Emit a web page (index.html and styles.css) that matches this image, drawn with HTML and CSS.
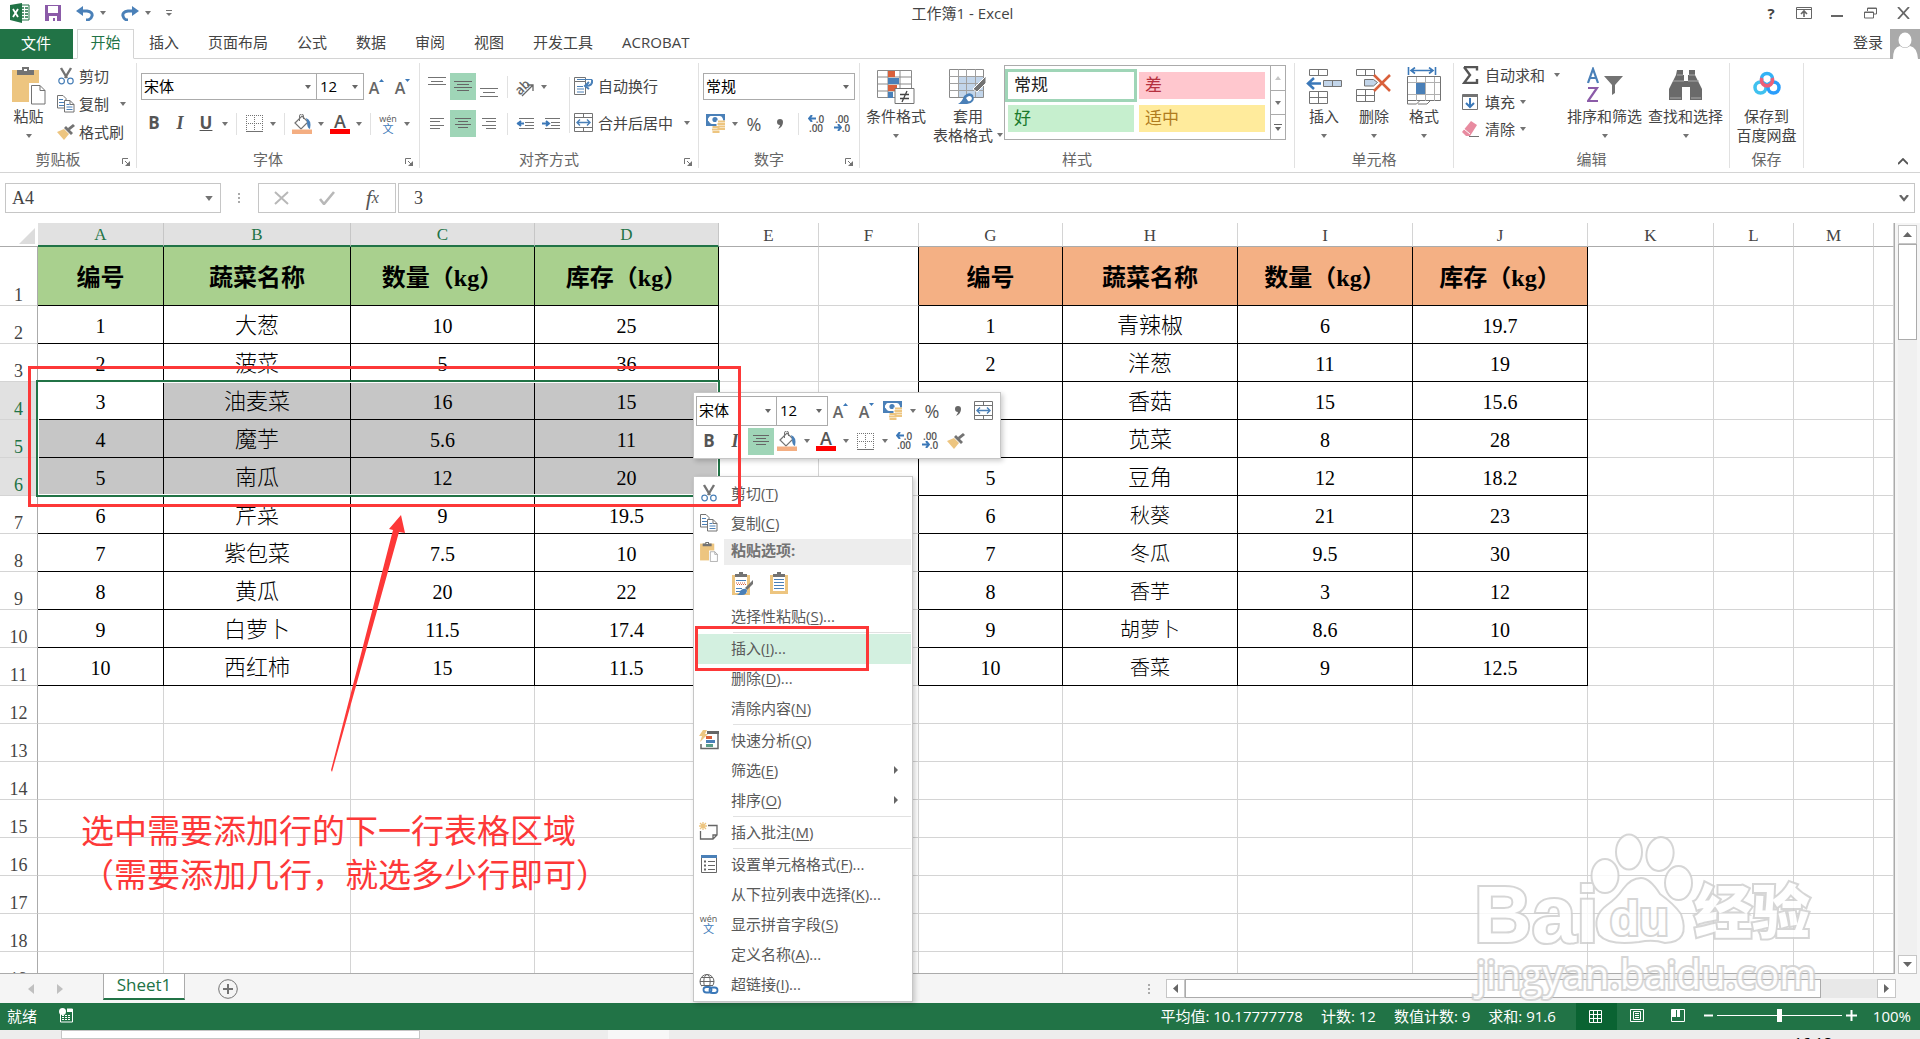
FILE: index.html
```
<!DOCTYPE html>
<html lang="zh-CN">
<head>
<meta charset="UTF-8">
<meta name="viewport" content="width=device-width, initial-scale=1">
<title>工作簿1 - Excel</title>
<link rel="stylesheet" href="styles.css">
</head>
<body>
<!-- icons used more than once -->
<svg width="0" height="0" class="defs">
  <symbol id="i-arrow" viewBox="0 0 6 4"><path d="M0 0h6L3 4z" fill="#737373"/></symbol>
  <symbol id="i-cut" viewBox="0 0 16 18"><path d="M3 1l6 10M13 1L7 11" stroke="#737373" stroke-width="2.4" fill="none"/><circle cx="3.6" cy="14" r="2.8" fill="none" stroke="#4a80b8" stroke-width="1.2"/><circle cx="12.4" cy="14" r="2.8" fill="none" stroke="#4a80b8" stroke-width="1.2"/></symbol>
  <symbol id="i-copy" viewBox="0 0 18 18"><path d="M.5 13V.5H6l3 3V13z" fill="#fff" stroke="#737373"/><path d="M2 4.500h4M2 7.500h5M2 10.500h5" stroke="#4a80b8"/><path d="M7.500 17V5.500H13l4 4V17z" fill="#fff" stroke="#737373"/><path d="M13 5.500v4h4" fill="none" stroke="#737373"/><path d="M9.500 9.500h3M9.500 12h6M9.500 14.500h6" stroke="#4a80b8"/></symbol>
  <symbol id="i-brush" viewBox="0 0 18 16"><path d="M0 8l7-3 5 5-5 6z" fill="#edc580"/><path d="M7 4l2-2 7 7-2 2zM11 4l5-4 2 2-5 4z" fill="#737373"/></symbol>
  <symbol id="i-paste" viewBox="0 0 34 38"><path d="M0 3h27v32H0z" fill="#edc580"/><path d="M5 7V3h5V0h7v3h5v5H5z" fill="#737373"/><path d="M12 2h3v2h-3z" fill="#fff"/><path d="M18.500 17.500H28l6 6V37H18.500z" fill="#fff" stroke="#fff" stroke-width="3"/><path d="M19.500 18.500H28l5 5V37H19.500z" fill="#fff" stroke="#737373"/><path d="M28 18.500v5h5" fill="none" stroke="#737373"/></symbol>
  <symbol id="i-borders" viewBox="0 0 17 17"><path d="M.5 0v17M8.500 0v17M16.500 0v17M0 .5h17M0 8.500h17" stroke="#737373" stroke-dasharray="1 1"/><path d="M0 16.500h17" stroke="#737373"/></symbol>
  <symbol id="i-fill" viewBox="0 0 20 20"><path d="M3 9l7-7 6 6-7 7z" fill="#fff" stroke="#737373" stroke-width="1.200"/><path d="M7.500 7V2q0-2 2-2t2 2v3" fill="none" stroke="#737373"/><path d="M14 4q6 2 4 11-3-1-3-7z" fill="#4a80b8"/><path d="M0 15.500h20V20H0z" fill="#f4ae82"/></symbol>
  <symbol id="i-money" viewBox="0 0 20 20"><path d="M0 0h19v12H0z" fill="#4a80b8"/><path d="M2 5q1-3 3-3h9q2 0 3 3v2H2z" fill="#fff"/><path d="M2 6q2 4 4 4h5V2H6Q3 2 2 6z" fill="#fff"/><circle cx="9" cy="5.500" r="2.600" fill="#4a80b8"/><path d="M10.500 6.500H20V17h-5v3H5.500v-8h5z" fill="#fff"/><path d="M12 7.500h7M11.500 10h7.500M12 12.500h7M11.500 15h7.500M6.500 13h7M6 15.500h7.500M6.500 18h7" stroke="#edc580" stroke-width="1.800"/></symbol>
  <symbol id="i-merge" viewBox="0 0 20 20"><path d="M.5 .5h18v18H.5zM.5 4.500h18M.5 14.500h18M9.500 .5v4M9.500 14.500v4" fill="#fff" stroke="#737373"/><path d="M3 9.500h13M6 6.500l-3 3 3 3M13 6.500l3 3-3 3" fill="none" stroke="#4a80b8" stroke-width="1.400"/></symbol>
  <symbol id="i-comma" viewBox="0 0 8 10"><path d="M4 0a3 3 0 0 1 3 3q0 5-5 7 2-3 2-4a3 3 0 1 1 0-6z" fill="#666"/></symbol>
  <symbol id="i-launch" viewBox="0 0 8 8"><path d="M.5 6V.5H6M3 3l3 3" fill="none" stroke="#737373"/><path d="M8 3v5H3z" fill="#737373"/></symbol>
  <symbol id="i-bluel" viewBox="0 0 8 7"><path d="M4 0L1 3.500 4 7M1 3.500h7" fill="none" stroke="#3b78b8" stroke-width="2"/></symbol>
</svg>

<header class="titlebar">
  <div class="qat">
    <svg class="logo" width="20" height="20"><path d="M9 2h10v15H9z" fill="#fff" stroke="#217346"/><path d="M12 5h2M15 5h3M12 8h2M15 8h3M12 11h2M15 11h3M12 14h2M15 14h3" stroke="#217346" stroke-width="1.500"/><path d="M0 2l12-2v20L0 17z" fill="#217346"/><path d="M3 6l5 8M8 6l-5 8" stroke="#fff" stroke-width="1.800"/></svg>
    <button aria-label="保存"><svg width="16" height="16"><path d="M0 0h16v16H0z" fill="#8b5ba8"/><path d="M3 1h10v7H3zM4 11h8v5h-2v-3H8v3H4z" fill="#fff"/></svg></button>
    <button aria-label="撤消"><svg width="18" height="15"><path d="M3 5h8q6 1 5 5-1 4-6 4" fill="none" stroke="#4a80b8" stroke-width="3"/><path d="M0 5l7-5v10z" fill="#4a80b8"/></svg><svg class="da"><use href="#i-arrow"/></svg></button>
    <button aria-label="恢复"><svg width="18" height="15"><path d="M15 5H7q-6 1-5 5 1 4 5 4" fill="none" stroke="#4a80b8" stroke-width="3"/><path d="M18 5l-7-5v10z" fill="#4a80b8"/></svg><svg class="da"><use href="#i-arrow"/></svg></button>
    <button aria-label="自定义"><svg width="6" height="7"><path d="M0 .5h6" stroke="#737373"/><path d="M0 3h6L3 6z" fill="#737373"/></svg></button>
  </div>
  <h1>工作簿1 - Excel</h1>
  <div class="winbtns">
    <button class="help">?</button>
    <button aria-label="功能区选项"><svg width="16" height="13"><path d="M.5 .5h15v11H.5zM.5 2.500h15" fill="none" stroke="#666"/><path d="M8 10V4M5 7l3-3 3 3" fill="none" stroke="#666" stroke-width="1.600"/></svg></button>
    <button aria-label="最小化"><svg width="12" height="12"><path d="M0 9h12" stroke="#666" stroke-width="2"/></svg></button>
    <button aria-label="还原"><svg width="13" height="12"><path d="M3.500 4V1h9v6H10M3 1.500h9M.5 5h9v6h-9zM.5 5.500h9" fill="none" stroke="#666"/></svg></button>
    <button aria-label="关闭"><svg width="13" height="12"><path d="M1 0l11 12M12 0L1 12" stroke="#666" stroke-width="1.800"/></svg></button>
  </div>
</header>

<nav class="tabs">
  <button class="file">文件</button>
  <button class="active">开始</button>
  <button>插入</button>
  <button>页面布局</button>
  <button>公式</button>
  <button>数据</button>
  <button>审阅</button>
  <button>视图</button>
  <button>开发工具</button>
  <button>ACROBAT</button>
  <a class="login" href="#">登录</a>
  <svg class="avatar" width="30" height="30"><path d="M0 0h30v30H0z" fill="#aaa"/><ellipse cx="15" cy="11" rx="6.500" ry="7.500" fill="#fff"/><path d="M3 30q0-12 7-13 5 4 10 0 7 1 8 13z" fill="#fff"/></svg>
</nav>

<section class="ribbon">
  <div class="group g-clip">
    <div class="body">
      <button class="big"><svg width="34" height="38"><use href="#i-paste"/></svg><span>粘贴</span><svg class="da"><use href="#i-arrow"/></svg></button>
      <div class="stack">
        <button><svg width="18" height="18"><use href="#i-cut"/></svg>剪切</button>
        <button><svg width="18" height="18"><use href="#i-copy"/></svg>复制<svg class="da far"><use href="#i-arrow"/></svg></button>
        <button><svg width="18" height="16"><use href="#i-brush"/></svg>格式刷</button>
      </div>
    </div>
    <footer class="more">剪贴板<svg class="launch"><use href="#i-launch"/></svg></footer>
  </div>

  <div class="group g-font">
    <div class="body rows">
      <div class="row">
        <select class="fontname" aria-label="字体"><option>宋体</option></select><select class="fontsize" aria-label="字号"><option>12</option></select>
        <button class="ib grow" aria-label="增大字号">A<svg width="6" height="4"><path d="M0 3h5L2.500 0z" fill="#3b78b8"/></svg></button>
        <button class="ib grow" aria-label="减小字号">A<svg width="6" height="4"><path d="M0 0h5L2.500 3z" fill="#3b78b8"/></svg></button>
      </div>
      <div class="row">
        <button class="ib b">B</button><button class="ib i">I</button><button class="ib u">U</button><button class="dd" aria-label="下划线"><svg class="da"><use href="#i-arrow"/></svg></button>
        <i class="sep"></i>
        <button class="ib" aria-label="边框"><svg width="17" height="17"><use href="#i-borders"/></svg></button><button class="dd" aria-label="边框选项"><svg class="da"><use href="#i-arrow"/></svg></button>
        <i class="sep"></i>
        <button class="ib" aria-label="填充颜色"><svg width="20" height="20"><use href="#i-fill"/></svg></button><button class="dd" aria-label="填充选项"><svg class="da"><use href="#i-arrow"/></svg></button>
        <button class="ib"><span class="fc">A</span></button><button class="dd" aria-label="字体颜色选项"><svg class="da"><use href="#i-arrow"/></svg></button>
        <i class="sep"></i>
        <button class="ib wen">wén<b>文</b></button><button class="dd" aria-label="拼音选项"><svg class="da"><use href="#i-arrow"/></svg></button>
      </div>
    </div>
    <footer class="more">字体<svg class="launch"><use href="#i-launch"/></svg></footer>
  </div>

  <div class="group g-align">
    <div class="body">
      <div class="rows">
        <div class="row">
          <button class="ib" aria-label="顶端对齐"><svg width="18" height="22"><path d="M0 1.500h18M3 5.500h12M0 8.500h18" stroke="#737373"/></svg></button><button class="ib on" aria-label="垂直居中"><svg width="18" height="14"><path d="M0 1.500h18M3 4.500h12M0 7.500h18M3 10.500h12" stroke="#666"/></svg></button><button class="ib" aria-label="底端对齐"><svg width="18" height="22"><path d="M0 12.500h18M3 16.500h12M0 20.500h18" stroke="#737373"/></svg></button>
          <i class="sep"></i>
          <button class="ib" aria-label="方向"><svg width="22" height="20"><text x="1" y="15" transform="rotate(-45 8 11)" font-size="13" font-family="Open Sans" font-weight="600" fill="#666">ab</text><path d="M8 19L19 8M13 8h6v6" fill="none" stroke="#666" stroke-width="1.300"/></svg></button><button class="dd" aria-label="方向选项"><svg class="da"><use href="#i-arrow"/></svg></button>
        </div>
        <div class="row">
          <button class="ib" aria-label="左对齐"><svg width="14" height="12"><path d="M0 .5h14M0 3.500h10M0 7.500h14M0 10.500h10" stroke="#737373"/></svg></button><button class="ib on" aria-label="居中"><svg width="18" height="14"><path d="M1 1.500h16M4 4.500h10M1 7.500h16M4 10.500h10" stroke="#666"/></svg></button><button class="ib" aria-label="右对齐"><svg width="14" height="12"><path d="M0 .5h14M4 3.500h10M0 7.500h14M4 10.500h10" stroke="#737373"/></svg></button>
          <i class="sep"></i>
          <button class="ib" aria-label="减少缩进"><svg width="18" height="12"><path d="M3 .5h15M9 4.500h9M9 7.500h9M3 10.500h15" stroke="#737373"/><path d="M5 3L2 5.500 5 8M1 5.500h7" fill="none" stroke="#3b78b8" stroke-width="2"/></svg></button><button class="ib" aria-label="增加缩进"><svg width="18" height="12"><path d="M3 .5h15M9 4.500h9M9 7.500h9M3 10.500h15" stroke="#737373"/><path d="M4 3l3 2.500L4 8M0 5.500h7" fill="none" stroke="#3b78b8" stroke-width="2"/></svg></button>
        </div>
      </div>
      <i class="sep tall"></i>
      <div class="rows">
        <div class="row"><button class="tb"><svg width="20" height="20"><path d="M.5 1.500h11v4H.5zM.5 5.500h11v13H.5z" fill="#fff" stroke="#737373"/><path d="M3 3.500h15v3q0 3-4 3h-2M3 10.500h6M3 13h7M3 16h7" fill="none" stroke="#4a80b8"/><path d="M15 6l-4 4 4 3M12 10q7 0 6-6" fill="none" stroke="#4a80b8" stroke-width="2"/></svg>自动换行</button></div>
        <div class="row"><button class="tb"><svg width="20" height="20"><use href="#i-merge"/></svg>合并后居中<svg class="da far"><use href="#i-arrow"/></svg></button></div>
      </div>
    </div>
    <footer class="more">对齐方式<svg class="launch"><use href="#i-launch"/></svg></footer>
  </div>

  <div class="group g-num">
    <div class="body rows">
      <div class="row"><select class="numfmt" aria-label="数字格式"><option>常规</option></select></div>
      <div class="row">
        <button class="ib" aria-label="会计格式"><svg width="20" height="20"><use href="#i-money"/></svg></button><button class="dd" aria-label="会计选项"><svg class="da"><use href="#i-arrow"/></svg></button><button class="ib pct">%</button><button class="ib" aria-label="千位分隔样式"><svg width="8" height="10"><use href="#i-comma"/></svg></button>
        <i class="sep"></i>
        <button class="ib dec"><span><svg width="8" height="7"><use href="#i-bluel"/></svg>.0</span><span>.00</span></button><button class="ib dec"><span>.00</span><span><svg class="flip" width="8" height="7"><use href="#i-bluel"/></svg>.0</span></button>
      </div>
    </div>
    <footer class="more">数字<svg class="launch"><use href="#i-launch"/></svg></footer>
  </div>

  <div class="group g-style">
    <div class="body">
      <button class="big w72"><svg width="38" height="38"><path d="M.5 3.500h34v27H.5zM.5 10h34M.5 17h34M.5 24h34M11 3v28M23 3v28" fill="#fff" stroke="#8a8a8a"/><path d="M11 4h7v6h-7zM11 18h9v6h-9z" fill="#d9603b"/><path d="M11 11h11v6H11zM11 25h5v6h-5z" fill="#4a80b8"/><path d="M18 21.500h19v15H18z" fill="#fff" stroke="#737373"/><path d="M23 27.500h9M23 31.500h9M30 24l-5 11" stroke="#444" stroke-width="1.300"/></svg><span>条件格式</span><svg class="da"><use href="#i-arrow"/></svg></button>
      <button class="big w72"><svg width="38" height="38"><path d="M.5 2.500h34v28H.5z" fill="#fff" stroke="#8a8a8a"/><path d="M9 9h25v21H9z" fill="#c2d5ea"/><path d="M.5 9.500h34M.5 16.500h34M.5 23.500h34M9.500 2v28M17.500 2v28M26.500 2v28" stroke="#a0a0a0"/><path d="M37 9v7l-9 9-4-3z" fill="#737373" stroke="#fff"/><path d="M9 37q4-2 6-8 5-5 9-1 3 8-6 9z" fill="#4a80b8"/><path d="M17 31q4-4 6 0-1 4-4 3z" fill="#fff"/></svg><span>套用</span><span class="last">表格格式<svg class="da"><use href="#i-arrow"/></svg></span></button>
      <div class="gallery">
        <button class="normal">常规</button><button class="bad">差</button>
        <button class="good">好</button><button class="neutral">适中</button>
        <div class="gscroll">
          <button aria-label="上一行"><svg width="6" height="4"><path d="M0 4h6L3 0z" fill="#c6c6c6"/></svg></button>
          <button aria-label="下一行"><svg class="da"><use href="#i-arrow"/></svg></button>
          <button aria-label="其他"><svg width="8" height="7"><path d="M0 .5h8" stroke="#666"/><path d="M1 3h6L4 7z" fill="#666"/></svg></button>
        </div>
      </div>
    </div>
    <footer>样式</footer>
  </div>

  <div class="group g-cells">
    <div class="body">
      <button class="big w50"><svg width="36" height="38"><path d="M3.500 2.500h18v6h-18zM12.500 2v6M3.500 24.500h18v12h-18zM3.500 30.500h18M12.500 24v12" fill="#fff" stroke="#737373"/><path d="M17.500 13.500h18v6h-18zM26.500 13v6" fill="#c2d5ea" stroke="#737373"/><path d="M8 11l-6 5.500 6 5.500M2 16.500h13" fill="none" stroke="#3b78b8" stroke-width="2.500"/></svg><span>插入</span><svg class="da"><use href="#i-arrow"/></svg></button>
      <button class="big w50"><svg width="36" height="38"><path d="M.5 2.500h18v6H.5zM9.500 2v6M.5 22.500h18v12H.5zM.5 28.500h18M9.500 22v12" fill="#fff" stroke="#737373"/><path d="M8.500 12.500h9l4 3-4 3.500h-9z" fill="#c2d5ea" stroke="#737373"/><path d="M18 8l16 16M34 8L18 24" stroke="#d9603b" stroke-width="2.500"/></svg><span>删除</span><svg class="da"><use href="#i-arrow"/></svg></button>
      <button class="big w50"><svg width="36" height="38"><path d="M2.500 0v8M29.500 0v8M5 3.500h22M9 .5l-4 3 4 3M23 .5l4 3-4 3" fill="none" stroke="#3b78b8" stroke-width="1.600"/><path d="M1.500 9.500h33v24h-33z" fill="#fff" stroke="#737373"/><path d="M10.500 10v24M19.500 10v24M28.500 10v24M2 15.500h32M2 27.500h32" stroke="#b0b0b0"/><path d="M10 16h9v11h-9z" fill="#4a80b8"/><path d="M1.500 33v4h9l4-4M12 37h9l4-4" fill="none" stroke="#737373"/></svg><span>格式</span><svg class="da"><use href="#i-arrow"/></svg></button>
    </div>
    <footer>单元格</footer>
  </div>

  <div class="group g-edit">
    <div class="body">
      <div class="stack">
        <button><svg width="18" height="18"><path d="M2 1h13v3.500M2 1l6 8-6 8h13v-4" fill="none" stroke="#555" stroke-width="2.400"/></svg>自动求和<svg class="da far"><use href="#i-arrow"/></svg></button>
        <button><svg width="18" height="18"><path d="M.5 1.500h15v15H.5z" fill="#fff" stroke="#737373"/><path d="M1 1h15v3H1z" fill="#737373"/><path d="M8 5v9M4 10l4 4 4-4" fill="none" stroke="#3b78b8" stroke-width="2"/></svg>填充<svg class="da"><use href="#i-arrow"/></svg></button>
        <button><svg width="18" height="18"><path d="M9 1l6 4-7 11H4L0 12z" fill="#e88ba0"/><path d="M2 9l6 5" stroke="#fff"/><path d="M7 16.500h10" stroke="#737373"/></svg>清除<svg class="da"><use href="#i-arrow"/></svg></button>
      </div>
      <button class="big w80"><svg width="36" height="38"><path d="M1 16L6 2l5 14M3 11h6" fill="none" stroke="#4a80b8" stroke-width="2.200"/><path d="M1 21h9L1 34h10" fill="none" stroke="#8b5ba8" stroke-width="2.200"/><path d="M17 9h19l-8 9v8l-3 2V18z" fill="#737373"/></svg><span>排序和筛选</span><svg class="da"><use href="#i-arrow"/></svg></button>
      <button class="big w80"><svg width="36" height="38"><path d="M9 3h6v5h1v6h4V8h1V3h6v5l3 6 4 8v11H22V20h-8v13H1V22l4-8 3-6z" fill="#6a6a6a"/><path d="M9 8h6M21 8h6M5 14h11M20 14h11M2 31h11M23 31h10" stroke="#aaa"/></svg><span>查找和选择</span><svg class="da"><use href="#i-arrow"/></svg></button>
    </div>
    <footer>编辑</footer>
  </div>

  <div class="group g-save">
    <div class="body">
      <button class="big"><svg width="28" height="38"><circle cx="7.500" cy="20.500" r="5.500" fill="none" stroke="#3fc1ef" stroke-width="3.500"/><circle cx="20.500" cy="20.500" r="5.500" fill="none" stroke="#2a9dfb" stroke-width="3.500"/><circle cx="14" cy="12" r="5.500" fill="none" stroke="#33b2f5" stroke-width="3.500"/><path d="M9 11a5.500 5.500 0 1 0 10 0" fill="none" stroke="#ee5f78" stroke-width="3.500"/></svg><span>保存到</span><span class="last">百度网盘</span></button>
    </div>
    <footer>保存</footer>
  </div>
  <button class="collapse" aria-label="折叠功能区"><svg width="10" height="7"><path d="M0 6l5-5 5 5" fill="none" stroke="#555" stroke-width="1.800"/></svg></button>
</section>

<div class="formulabar">
  <div class="namebox"><input aria-label="名称框" value="A4"><svg width="8" height="5"><use href="#i-arrow"/></svg></div>
  <span class="dots"></span>
  <div class="fxbtns">
    <button aria-label="取消"><svg width="16" height="14"><path d="M1 1l13 12M14 1L1 13" stroke="#b8b8b8" stroke-width="2"/></svg></button>
    <button aria-label="输入"><svg width="16" height="14"><path d="M1 8l4 5L15 1" fill="none" stroke="#b8b8b8" stroke-width="2.600"/></svg></button>
    <button class="fx">f<small>x</small></button>
  </div>
  <div class="finput"><input aria-label="编辑栏" value="3"><svg width="10" height="7"><path d="M1 0l4 5 4-5" fill="none" stroke="#666" stroke-width="2.200"/></svg></div>
</div>

<main class="workspace">
  <div class="grid">
    <table id="sheet">
      <colgroup>
        <col class="c-head"><col class="c126"><col class="c187"><col class="c184"><col class="c184"><col class="c100"><col class="c100"><col class="c144"><col class="c175"><col class="c175"><col class="c175"><col class="c126"><col class="c80"><col class="c80"><col>
      </colgroup>
      <thead></thead>
      <tbody></tbody>
    </table>
  </div>
  <div class="vscroll">
    <button aria-label="向上滚动"><svg width="9" height="5"><path d="M0 5h9L4.500 0z" fill="#666"/></svg></button>
    <div class="thumb"></div>
    <button aria-label="向下滚动"><svg width="9" height="5"><path d="M0 0h9L4.500 5z" fill="#666"/></svg></button>
  </div>

  <div class="selection"></div>

  <div class="watermark">
    <span class="bai">Bai</span><span class="jy">经验</span>
    <svg class="paw" width="92" height="112"><g fill="#fff" stroke="#d0d0d0" stroke-width="2"><ellipse cx="15" cy="43" rx="13.500" ry="17"/><ellipse cx="39" cy="19" rx="13" ry="17.500"/><ellipse cx="70" cy="21" rx="13.500" ry="17" transform="rotate(10 70 21)"/><ellipse cx="88.500" cy="50" rx="13.500" ry="17"/><path d="M51 45q9 0 19 16 14 10 21 20 10 28-16 29-12-4-26-1-30 4-40-7-8-18 8-30 10-7 16-16 8-11 18-11z"/></g></svg>
    <span class="du">du</span>
    <span class="site">jingyan.baidu.com</span>
  </div>

  <div class="minibar">
    <div class="row">
      <select class="fontname" aria-label="字体"><option>宋体</option></select><select class="fontsize" aria-label="字号"><option>12</option></select>
      <button class="ib grow" aria-label="增大字号">A<svg width="6" height="4"><path d="M0 3h5L2.500 0z" fill="#3b78b8"/></svg></button><button class="ib grow" aria-label="减小字号">A<svg width="6" height="4"><path d="M0 0h5L2.500 3z" fill="#3b78b8"/></svg></button>
      <button class="ib" aria-label="会计格式"><svg width="20" height="20"><use href="#i-money"/></svg></button><button class="dd" aria-label="会计选项"><svg class="da"><use href="#i-arrow"/></svg></button><button class="ib pct">%</button><button class="ib" aria-label="千位分隔样式"><svg width="8" height="10"><use href="#i-comma"/></svg></button><button class="ib" aria-label="合并后居中"><svg width="20" height="20"><use href="#i-merge"/></svg></button>
    </div>
    <div class="row">
      <button class="ib b">B</button><button class="ib i">I</button><button class="ib on" aria-label="居中"><svg width="18" height="14"><path d="M1 1.500h16M4 4.500h10M1 7.500h16M4 10.500h10" stroke="#666"/></svg></button><button class="ib" aria-label="填充颜色"><svg width="20" height="20"><use href="#i-fill"/></svg></button><button class="dd" aria-label="填充选项"><svg class="da"><use href="#i-arrow"/></svg></button><button class="ib"><span class="fc">A</span></button><button class="dd" aria-label="字体颜色选项"><svg class="da"><use href="#i-arrow"/></svg></button><button class="ib" aria-label="边框"><svg width="17" height="17"><use href="#i-borders"/></svg></button><button class="dd" aria-label="边框选项"><svg class="da"><use href="#i-arrow"/></svg></button><button class="ib dec"><span><svg width="8" height="7"><use href="#i-bluel"/></svg>.0</span><span>.00</span></button><button class="ib dec"><span>.00</span><span><svg class="flip" width="8" height="7"><use href="#i-bluel"/></svg>.0</span></button><button class="ib" aria-label="格式刷"><svg width="18" height="16"><use href="#i-brush"/></svg></button>
    </div>
  </div>

  <div class="menu">
    <button><i><svg width="18" height="18"><use href="#i-cut"/></svg></i>剪切(<u>T</u>)</button>
    <button><i><svg width="18" height="18"><use href="#i-copy"/></svg></i>复制(<u>C</u>)</button>
    <div class="phead"><i><svg width="20" height="20"><use href="#i-paste"/></svg></i><b>粘贴选项:</b></div>
    <div class="popts">
      <button aria-label="粘贴"><svg width="22" height="24"><path d="M0 3h18v20H0z" fill="#edc580"/><path d="M3 4h12v17H3z" fill="#fff"/><path d="M3 5V2h4V0h4v2h4v3z" fill="#737373"/><path d="M4 8.500h10M4 16.500h6M4 19.500h4" stroke="#4a80b8"/><path d="M4 11h10M5 12.500h9" stroke="#d9603b" stroke-dasharray="1 1"/><path d="M21 8v4l-6 6-2-2z" fill="#737373"/><path d="M4 23q4-1 4-4 4-4 7-1 0 5-5 5z" fill="#4a80b8"/></svg></button>
      <button aria-label="值"><svg width="18" height="24"><path d="M0 3h18v19H0z" fill="#edc580"/><path d="M3 4h12v15H3z" fill="#fff"/><path d="M3 5V2h4V0h4v2h4v3z" fill="#737373"/><path d="M4 7.500h10M4 10.500h10M4 13.500h10M4 16.500h10" stroke="#4a80b8"/></svg></button>
    </div>
    <button><i></i>选择性粘贴(<u>S</u>)...</button>
    <hr>
    <button class="hot"><i></i>插入(<u>I</u>)...</button>
    <button><i></i>删除(<u>D</u>)...</button>
    <button><i></i>清除内容(<u>N</u>)</button>
    <hr>
    <button><i><svg width="20" height="20"><path d="M9 2.500h10v16H2V14" fill="none" stroke="#666" stroke-width="1.500"/><path d="M8 1h12v3H8z" fill="#666"/><path d="M7 6h6v3H7z" fill="#d9603b"/><path d="M7 10h9v3H7z" fill="#4a80b8"/><path d="M7 14h7v3H7z" fill="#5c9e88"/><path d="M4 0h4L6 4h3l-8 8 2-6H0z" fill="#edc580"/></svg></i>快速分析(<u>Q</u>)</button>
    <button><i></i>筛选(<u>E</u>)<svg class="sub" width="5" height="8"><path d="M0 0v8l4-4z" fill="#666"/></svg></button>
    <button><i></i>排序(<u>O</u>)<svg class="sub" width="5" height="8"><path d="M0 0v8l4-4z" fill="#666"/></svg></button>
    <hr>
    <button><i><svg width="20" height="20"><path d="M9 3.500h9V13l-4 4H1.500V9M18 13h-4v4" fill="none" stroke="#666" stroke-width="1.300"/><path d="M4 0v8M0 4h8M1 1l6 6M7 1L1 7" stroke="#edc580" stroke-width="1.300"/></svg></i>插入批注(<u>M</u>)</button>
    <hr>
    <button><i><svg width="18" height="18"><path d="M1.500 1.500h15v16h-15z" fill="#fff" stroke="#666"/><path d="M1 0h16v3H1z" fill="#4a80b8"/><path d="M4 6.500h2M4 10.500h2M4 14.500h2" stroke="#666" stroke-width="2"/><path d="M8 6.500h7M8 10.500h7M8 14.500h7" stroke="#666"/></svg></i>设置单元格格式(<u>F</u>)...</button>
    <button><i></i>从下拉列表中选择(<u>K</u>)...</button>
    <button><i class="wen">wén<b>文</b></i>显示拼音字段(<u>S</u>)</button>
    <button><i></i>定义名称(<u>A</u>)...</button>
    <button><i><svg width="20" height="20"><g fill="none" stroke="#666"><circle cx="8" cy="7.500" r="7"/><ellipse cx="8" cy="7.500" rx="3.200" ry="7"/><path d="M1 7.500h14M2 3.500h12M2 11.500h12"/></g><path d="M3 12h17v8H3z" fill="#fff"/><g fill="none" stroke="#3b78b8" stroke-width="1.800"><rect x="4.500" y="13" width="8" height="5.500" rx="2.700"/><rect x="10.500" y="13.500" width="8" height="5.500" rx="2.700"/></g></svg></i>超链接(<u>I</u>)...</button>
  </div>

  <!-- red tutorial marks -->
  <div class="mark mark-rows"></div>
  <div class="mark mark-insert"></div>
  <svg class="pointer" width="75" height="257"><path d="M70 0L58 14l4 1L0 255l1 2L68 17l6 1z" fill="#fd3838"/></svg>
  <p class="note">选中需要添加行的下一行表格区域<br>（需要添加几行，就选多少行即可）</p>
</main>

<div class="sheetbar">
  <div class="navs"><button aria-label="上一个"><svg width="6" height="10"><path d="M6 0v10L0 5z" fill="#c0c0c0"/></svg></button><button aria-label="下一个"><svg width="6" height="10"><path d="M0 0v10l6-5z" fill="#c0c0c0"/></svg></button></div>
  <button class="sheettab">Sheet1</button>
  <button class="add" aria-label="新工作表"><svg width="20" height="20"><circle cx="10" cy="10" r="9.300" fill="none" stroke="#737373"/><path d="M5 10h10M10 5v10" stroke="#737373" stroke-width="2"/></svg></button>
  <span class="dots"></span>
  <div class="hscroll">
    <button aria-label="向左滚动"><svg width="5" height="9"><path d="M5 0v9L0 4.500z" fill="#666"/></svg></button>
    <div class="thumb"></div>
    <button aria-label="向右滚动"><svg width="5" height="9"><path d="M0 0v9l5-4.500z" fill="#666"/></svg></button>
  </div>
</div>

<footer class="status">
  <span class="ready">就绪</span>
  <svg width="15" height="15"><path d="M1.500 5v9h12V1H8" fill="none" stroke="#fff"/><circle cx="3.500" cy="3.500" r="3.500" fill="#fff"/><path d="M8 1h6v3H8z" fill="#fff"/><path d="M3 7.500h9M3 9.500h9M3 11.500h9" stroke="#fff" stroke-dasharray="2 1"/></svg>
  <div class="stats"><span>平均值: 10.17777778</span><span>计数: 12</span><span>数值计数: 9</span><span>求和: 91.6</span></div>
  <div class="views">
    <button class="on" aria-label="普通"><svg width="14" height="14"><path d="M.5 .5h12v12H.5zM4.500 0v13M8.500 0v13M0 4.500h13M0 8.500h13" fill="none" stroke="#fff"/></svg></button>
    <button aria-label="页面布局"><svg width="14" height="14"><path d="M.5 .5h13v12H.5zM3.500 2.500h7v8h-7zM5 4.500h4M5 6.500h4M5 8.500h4" fill="none" stroke="#fff"/></svg></button>
    <button aria-label="分页预览"><svg width="14" height="14"><path d="M.5 .5h13v12H.5z" fill="none" stroke="#fff"/><path d="M1 1h4v7H1zM6 1h3v7H6z" fill="#fff"/></svg></button>
  </div>
  <button class="zb" aria-label="缩小"><svg width="9" height="11"><path d="M0 5.500h9" stroke="#fff" stroke-width="2"/></svg></button>
  <input type="range" class="zoom" aria-label="显示比例" min="0" max="200" value="100">
  <button class="zb" aria-label="放大"><svg width="11" height="11"><path d="M0 5.500h11M5.500 0v11" stroke="#fff" stroke-width="2"/></svg></button>
  <span class="pctval">100%</span>
</footer>
<div class="taskbar"><div class="search"></div><div class="task"></div><span class="clock">16:18</span></div>
<script src="script.js"></script>
</body>
</html>
```
FILE: styles.css
```
* {
  box-sizing: border-box;
}
body {
  margin: 0;
  height: 100vh;
  display: flex;
  flex-direction: column;
  overflow: hidden;
  background: #fff;
  color: #444;
  font-family: "Open Sans", "Noto Sans CJK SC", sans-serif;
  font-size: 15px;
  line-height: 18px;
}
button, input, select {
  font: inherit;
  color: inherit;
  margin: 0;
  padding: 0;
  border: 0;
  background: none;
  border-radius: 0;
  outline: none;
}
button {
  display: flex;
  align-items: center;
  justify-content: center;
  white-space: nowrap;
}
svg {
  flex: none;
  display: block;
}
.defs {
  position: absolute;
}
.da {
  width: 6px;
  height: 4px;
}

/* title bar */
.titlebar {
  display: grid;
  grid-template-columns: 1fr auto 1fr;
  align-items: center;
  height: 29px;
  padding: 0 5px 3px 10px;
}
.titlebar h1 {
  margin: 0;
  font-size: 15px;
  font-weight: 400;
}
.qat {
  display: flex;
  align-items: center;
  gap: 15px;
}
.qat button {
  gap: 6px;
}
.winbtns {
  display: flex;
  justify-content: flex-end;
  gap: 9px;
}
.winbtns button {
  width: 24px;
  height: 22px;
}
.help {
  font-weight: 700;
}

/* tabs */
.tabs {
  display: flex;
  height: 30px;
  border-bottom: 1px solid #d4d4d4;
}
.tabs button {
  height: 29px;
  padding: 0 15px 3px 14px;
}
.tabs .file {
  width: 73px;
  height: 30px;
  margin-right: 4px;
  background: #217346;
  color: #fff;
}
.tabs .active {
  width: 57px;
  height: 30px;
  border: 1px solid #d4d4d4;
  border-bottom-color: #fff;
  padding: 0 0 4px;
  margin-right: 1px;
  color: #217346;
}
.login {
  margin-left: auto;
  padding: 4px 7px 0 0;
  color: #444;
  text-decoration: none;
}

/* ribbon */
.ribbon {
  display: flex;
  height: 114px;
  padding: 4px 0;
  border-bottom: 1px solid #d4d4d4;
}
.group {
  display: flex;
  flex-direction: column;
  border-right: 1px solid #e1e1e1;
}
.group .body {
  display: flex;
  height: 88px;
}
.group footer {
  position: relative;
  color: #666;
  text-align: center;
}
.group .more {
  padding-right: 20px;
}
.launch {
  position: absolute;
  right: 6px;
  top: 8px;
  width: 8px;
  height: 8px;
}
.g-clip { width: 137px; }
.g-font { width: 283px; }
.g-align { width: 279px; }
.g-num { width: 161px; }
.g-style { width: 435px; }
.g-cells { width: 159px; }
.g-edit { width: 276px; }
.g-save { width: 74px; }
.big {
  flex-direction: column;
  justify-content: flex-start;
  width: 100%;
  padding-top: 4px;
}
.g-clip .big {
  width: 57px;
}
.big span {
  margin-top: 2px;
}
.big span + .last {
  display: flex;
  align-items: center;
  gap: 4px;
  margin-top: 1px;
}
.big > .da {
  margin-top: 9px;
}
.w72 { width: 72px; }
.w50 { width: 50px; }
.w80 { width: 81px; }
.g-cells .body { padding-left: 4px; }
.stack {
  display: flex;
  flex-direction: column;
}
.stack button {
  height: 28px;
  padding-bottom: 3px;
  justify-content: flex-start;
  gap: 5px;
}
.g-clip .stack button {
  gap: 4px;
}
.stack .far, .tb .far {
  margin-left: 7px;
}
.g-edit .stack {
  width: 110px;
  padding-left: 8px;
}
.g-edit .stack button {
  height: 27px;
}
.g-edit .far {
  margin-left: 4px;
}
.body.rows, .rows {
  display: flex;
  flex-direction: column;
  gap: 10px;
  padding-top: 10px;
}
.g-font .rows, .g-align .body, .g-num .rows {
  padding-left: 4px;
}
.row {
  display: flex;
  align-items: center;
  height: 27px;
}
.ib {
  width: 26px;
  height: 27px;
  color: #555;
}
.dd {
  width: 12px;
  height: 27px;
}
.on {
  background: #9fd5b7;
}
.sep {
  width: 1px;
  height: 22px;
  margin: 0 4px 0 5px;
  background: #e1e1e1;
}
.tall {
  height: 56px;
  margin-top: 14px;
}
select {
  appearance: none;
  height: 27px;
  padding: 0 0 2px 2px;
  border: 1px solid #ababab;
  color: #000;
  background: #fff url("data:image/svg+xml,%3Csvg xmlns='http://www.w3.org/2000/svg' width='6' height='4'%3E%3Cpath d='M0 0h6L3 4z' fill='%23666'/%3E%3C/svg%3E") no-repeat right 5px center;
}
.fontname { width: 176px; }
.fontsize { width: 48px; margin-left: -1px; padding-left: 3px; }
.numfmt { width: 152px; }
.grow {
  padding-top: 2px;
  font-size: 16px;
  font-weight: 600;
  color: #666;
}
.grow svg {
  margin-bottom: 14px;
}
.b, .i, .u {
  padding-bottom: 1px;
  font-size: 17px;
  font-weight: 700;
}
.i {
  font-family: "Liberation Serif", serif;
  font-style: italic;
  font-size: 18px;
}
.u {
  text-decoration: underline;
}
.fc {
  width: 20px;
  height: 20px;
  border-bottom: 5px solid #f00;
  font-size: 18px;
  font-weight: 600;
  line-height: 14px;
}
.wen {
  flex-direction: column;
  font-size: 9px;
  font-style: normal;
  line-height: 9px;
}
.wen b {
  font-size: 11px;
  font-weight: 400;
  line-height: 11px;
  color: #3b78b8;
}
.pct { font-size: 18px; }
.dec {
  flex-direction: column;
  font-size: 10px;
  font-weight: 600;
  line-height: 9px;
}
.dec span {
  display: flex;
}
.flip {
  transform: scaleX(-1);
}
.tb {
  gap: 4px;
  padding-bottom: 2px;
}
.gallery {
  display: grid;
  grid-template-columns: 126px 126px 1fr;
  grid-template-rows: 27px 27px;
  gap: 6px 5px;
  width: 282px;
  height: 75px;
  margin-top: 2px;
  padding: 6px 0 0 3px;
  border: 1px solid #ababab;
  font-size: 17px;
}
.gallery > button {
  justify-content: flex-start;
  padding: 0 0 2px 6px;
}
.gallery .normal {
  color: #222;
  outline: 3px solid #9fd5b7;
}
.bad { background: #ffc7ce; color: #b5313f; }
.good { background: #c6efce; color: #1a7a2c; }
.neutral { background: #ffeb9c; color: #b07c1e; }
.gscroll {
  grid-column: 3;
  grid-row: 1 / 3;
  display: flex;
  flex-direction: column;
  height: 73px;
  margin-top: -6px;
  border-left: 1px solid #ababab;
}
.gscroll button {
  flex: 1;
}
.gscroll button + button {
  border-top: 1px solid #ababab;
}
.collapse {
  align-self: flex-end;
  margin: 0 12px 3px auto;
}

/* formula bar */
.formulabar {
  display: flex;
  align-items: center;
  height: 50px;
  padding: 0 5px;
  font-family: "Liberation Serif", serif;
  font-size: 18px;
}
.namebox, .fxbtns, .finput {
  display: flex;
  align-items: center;
  height: 30px;
  border: 1px solid #c6c6c6;
}
.namebox {
  width: 216px;
  padding: 0 7px 0 6px;
}
.namebox input, .finput input {
  flex: 1;
  min-width: 0;
}
.dots {
  width: 2px;
  height: 10px;
  margin: 0 18px 0 17px;
  background: repeating-linear-gradient(#aaa 0 2px, transparent 2px 4px);
}
.fxbtns {
  width: 138px;
}
.fxbtns button {
  flex: 1;
}
.fx {
  font-style: italic;
  font-size: 22px;
  color: #555;
}
.fx small {
  font-size: 16px;
}
.finput {
  flex: 1;
  margin-left: 2px;
  padding: 0 5px 0 15px;
}

/* sheet */
.workspace {
  position: relative;
  z-index: 1;
  flex: 1;
  min-height: 0;
  display: flex;
  background: #f5f5f5;
}
.grid {
  flex: 1;
  overflow: hidden;
  background: #fff;
  border-right: 1px solid #ababab;
  border-bottom: 1px solid #ababab;
}
#sheet {
  width: 100%;
  table-layout: fixed;
  border-collapse: separate;
  border-spacing: 0;
  font-family: "Liberation Serif", "Noto Sans CJK SC", serif;
  font-size: 20px;
  color: #000;
}
.c-head { width: 38px; }
.c80 { width: 80px; }
.c100 { width: 100px; }
.c126 { width: 126px; }
.c144 { width: 144px; }
.c175 { width: 175px; }
.c184 { width: 184px; }
.c187 { width: 187px; }
#sheet th, #sheet td {
  height: 38px;
  padding: 2px 0 0;
  border-right: 1px solid #d4d4d4;
  border-bottom: 1px solid #d4d4d4;
  text-align: center;
  line-height: 22px;
}
#sheet tbody tr:first-child > * {
  height: 59px;
}
#sheet thead th {
  height: 24px;
  line-height: 20px;
  border-bottom-color: #ababab;
  font-size: 17px;
  font-weight: 400;
  color: #444;
}
#sheet thead .sel {
  background: #e1e1e1;
  border-bottom: 2px solid #217346;
  border-right-color: #c6c6c6;
  color: #217346;
}
#sheet thead .corner {
  border-right: 0;
}
.corner svg {
  margin: 0 3px 0 auto;
}
#sheet tbody th {
  vertical-align: bottom;
  border-right-color: #ababab;
  font-size: 18px;
  line-height: 20px;
  font-weight: 400;
  color: #444;
}
#sheet tbody th.sel {
  background: #e1e1e1;
  color: #217346;
}
#sheet td.box {
  border-color: #000;
}
#sheet td.edge {
  border-right-color: #000;
}
#sheet td.title {
  padding-top: 4px;
  font-size: 24px;
  line-height: 28px;
  font-weight: 700;
}
#sheet td.name {
  font-size: 22px;
  font-weight: 300;
}
#sheet td.small {
  font-size: 20px;
}
.title.green { background: #a9d08e; }
.title.orange { background: #f4b084; }
#sheet td.picked { background: #c6c6c6; }
.selection {
  position: absolute;
  left: 36px;
  top: 157px;
  width: 684px;
  height: 117px;
  border: 2px solid #217346;
  box-shadow: inset 0 0 0 1px #fff;
}
.vscroll {
  width: 19px;
  margin: 2px 3px 0 3px;
  display: flex;
  flex-direction: column;
  background: #f0f0f0;
}
.vscroll button, .hscroll button {
  width: 19px;
  height: 19px;
  border: 1px solid #c6c6c6;
  background: #fff;
}
.thumb {
  border: 1px solid #ababab;
  background: #fff;
}
.vscroll .thumb {
  height: 96px;
  margin-bottom: auto;
}

/* floating toolbar and context menu */
.minibar {
  position: absolute;
  left: 693px;
  top: 169px;
  width: 308px;
  padding: 3px 2px 2px;
  border: 1px solid #c6c6c6;
  background: #fff;
  box-shadow: 2px 2px 5px rgba(0,0,0,0.2);
}
.minibar .row {
  height: 30px;
}
.minibar select {
  height: 30px;
}
.minibar .fontname { width: 81px; }
.minibar .fontsize { width: 52px; }
.minibar .dd { width: 13px; }
.menu {
  position: absolute;
  left: 693px;
  top: 253px;
  width: 220px;
  padding: 2px 1px 1px;
  border: 1px solid #c6c6c6;
  background: #fff;
  box-shadow: 2px 2px 5px rgba(0,0,0,0.2);
  color: #595959;
}
.menu button, .phead {
  display: flex;
  width: 100%;
  height: 30px;
  padding-bottom: 3px;
  justify-content: flex-start;
  align-items: center;
}
.menu i {
  display: flex;
  align-items: center;
  justify-content: center;
  width: 27px;
  margin-right: 9px;
}
.menu .phead {
  height: 26px;
  padding: 0;
}
.phead i {
  margin-right: 2px;
}
.phead b {
  flex: 1;
  padding: 2px 7px 6px;
  background: #ededed;
  color: #737373;
}
.popts {
  display: flex;
  height: 37px;
  padding-left: 30px;
}
.menu .popts button {
  width: 36px;
  height: 37px;
  padding: 0;
  justify-content: center;
}
.menu hr {
  height: 1px;
  margin: 0 0 1px 38px;
  border: 0;
  background: #e1e1e1;
}
.menu .hot {
  background: #d3f0e0;
}
.menu u {
  text-underline-offset: 2px;
}
.sub {
  margin: 0 12px 0 auto;
}

/* tutorial marks */
.mark {
  position: absolute;
  border: 3px solid #fd3838;
}
.mark-rows {
  left: 28px;
  top: 143px;
  width: 713px;
  height: 141px;
}
.mark-insert {
  left: 695px;
  top: 403px;
  width: 174px;
  height: 45px;
}
.pointer {
  position: absolute;
  left: 331px;
  top: 292px;
}
.note {
  position: absolute;
  left: 81px;
  top: 584px;
  margin: 0;
  font-family: "Noto Sans CJK SC", sans-serif;
  font-size: 33px;
  line-height: 44px;
  color: #fd3838;
  white-space: nowrap;
}
.watermark {
  position: absolute;
  left: 1474px;
  top: 610px;
  width: 345px;
  height: 170px;
  opacity: 0.85;
  font-family: "Liberation Sans", "Noto Sans CJK SC", sans-serif;
  font-weight: 700;
  color: #fff;
}
.watermark span {
  position: absolute;
  -webkit-text-stroke: 4px #d0d0d0;
  paint-order: stroke fill;
}
.watermark .bai { left: 0; top: 43px; font-size: 80px; line-height: 78px; }
.watermark .jy { left: 220px; top: 38px; font-size: 58px; line-height: 84px; font-weight: 900; }
.watermark .du { left: 136px; top: 62px; font-size: 48px; line-height: 48px; }
.watermark .site { left: 2px; top: 116px; font-family: "Open Sans", sans-serif; font-size: 40px; line-height: 50px; font-weight: 400; }
.paw {
  position: absolute;
  left: 116px;
  top: 0;
  overflow: visible;
}

/* sheet tabs */
.sheetbar {
  display: flex;
  align-items: center;
  height: 29px;
  background: #f5f5f5;
}
.navs {
  display: flex;
  gap: 23px;
  width: 103px;
  padding-left: 28px;
}
.sheettab {
  align-self: flex-start;
  width: 82px;
  height: 26px;
  padding-bottom: 2px;
  background: #fff;
  border: 1px solid #ababab;
  border-top: 0;
  border-bottom: 2px solid #217346;
  color: #217346;
  font-size: 17px;
}
.add {
  margin-left: 33px;
}
.sheetbar .dots {
  margin: 0 16px 0 auto;
}
.hscroll {
  display: flex;
  width: 38%;
  height: 19px;
  margin-right: 24px;
  background: #e8e8e8;
}
.hscroll .thumb {
  flex: 0 1 636px;
  margin-right: auto;
}

/* status bar */
.status {
  display: flex;
  align-items: center;
  height: 27px;
  padding: 0 9px 2px 7px;
  background: #217346;
  color: #fff;
}
.ready {
  margin-right: 22px;
}
.stats {
  display: flex;
  gap: 18px;
  margin: 0 20px 0 auto;
}
.views {
  display: flex;
  align-self: stretch;
  margin-right: 5px;
}
.views button {
  width: 41px;
}
.views .on {
  height: 27px;
  background: #0a6332;
}
.zoom {
  appearance: none;
  width: 125px;
  height: 14px;
  margin: 0 4px;
  background: linear-gradient(#fff, #fff) no-repeat center / 100% 1px;
}
.zoom::-webkit-slider-thumb {
  appearance: none;
  width: 5px;
  height: 13px;
  background: #fff;
}
.pctval {
  margin-left: 16px;
}
.taskbar {
  display: flex;
  height: 9px;
  overflow: hidden;
  background: #ededed;
}
.search {
  width: 359px;
  margin-left: 61px;
  border: 1px solid #c6c6c6;
  background: #fff;
}
.task {
  width: 61px;
  margin-left: 188px;
  background: #f7f7f7;
}
.clock {
  margin: 3px 88px 0 auto;
  color: #000;
}
```
FILE: script.js
```
const cols = "ABCDEFGHIJKLM".split("");
const titles = ["编号", "蔬菜名称", "数量（kg）", "库存（kg）"];
const left = [
  ["大葱", "10", "25"],
  ["菠菜", "5", "36"],
  ["油麦菜", "16", "15"],
  ["魔芋", "5.6", "11"],
  ["南瓜", "12", "20"],
  ["芹菜", "9", "19.5"],
  ["紫包菜", "7.5", "10"],
  ["黄瓜", "20", "22"],
  ["白萝卜", "11.5", "17.4"],
  ["西红柿", "15", "11.5"]
];
const right = [
  ["青辣椒", "6", "19.7"],
  ["洋葱", "11", "19"],
  ["香菇", "15", "15.6"],
  ["苋菜", "8", "28"],
  ["豆角", "12", "18.2"],
  ["秋葵", "21", "23"],
  ["冬瓜", "9.5", "30"],
  ["香芋", "3", "12"],
  ["胡萝卜", "8.6", "10"],
  ["香菜", "9", "12.5"]
];

const head = document.querySelector("#sheet thead");
const body = document.querySelector("#sheet tbody");

let h = '<tr><th class="corner"><svg width="16" height="16"><path d="M16 0v16H0z" fill="#dcdcdc"/></svg></th>';
cols.forEach((c, i) => {
  h += `<th class="${i < 4 ? "sel" : ""}">${c}</th>`;
});
head.innerHTML = h + "<th></th></tr>";

function cell(r, c) {
  if (r > 11) return "<td></td>";
  const side = c < 4 ? left : right;
  const k = c < 4 ? c : c - 6;
  if (k < 0 || k > 3) return `<td class="${c === 5 ? "edge" : ""}"></td>`;
  if (r === 1) return `<td class="box title ${c < 4 ? "green" : "orange"}">${titles[k]}</td>`;
  const text = k === 0 ? r - 1 : side[r - 2][k - 1];
  let cls = "box";
  if (k === 1) cls += " name";
  if (k === 1 && c > 4 && r > 6) cls += " small";
  if (c < 4 && r > 3 && r < 7 && !(r === 4 && c === 0)) cls += " picked";
  return `<td class="${cls}">${text}</td>`;
}

let rows = "";
for (let r = 1; r <= 19; r++) {
  rows += `<tr><th class="${r > 3 && r < 7 ? "sel" : ""}">${r}</th>`;
  for (let c = 0; c < 14; c++) rows += cell(r, c);
  rows += "</tr>";
}
body.innerHTML = rows;
```
